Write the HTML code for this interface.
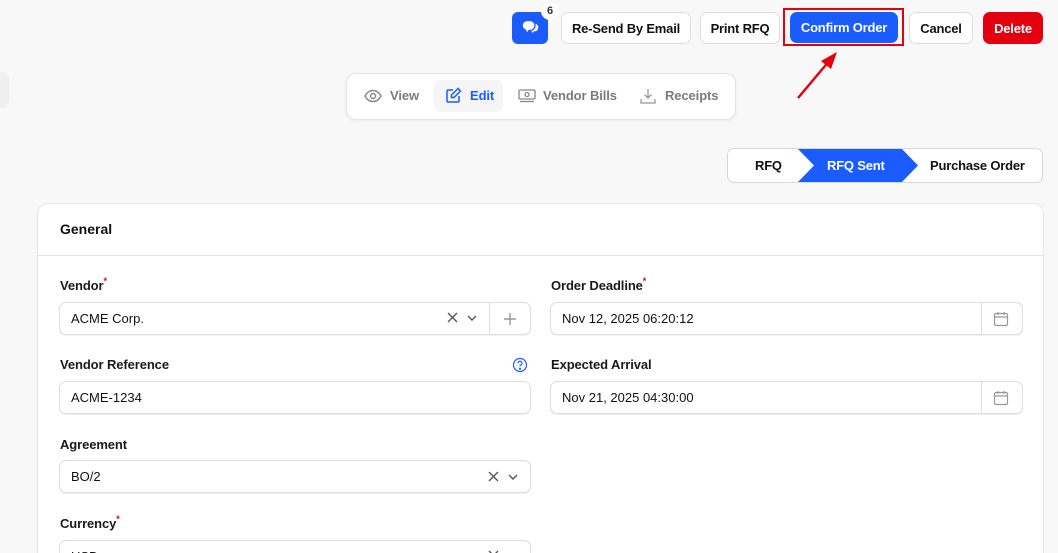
<!DOCTYPE html>
<html style="width:1058px;height:553px;overflow:hidden"><head><meta charset="utf-8"><style>
*{box-sizing:border-box;margin:0;padding:0}
body{width:1058px;height:553px;overflow:hidden;background:#f8f8f8;font-family:"Liberation Sans",sans-serif;color:#111;position:relative;font-size:13px}
.a{position:absolute}
.btn{position:absolute;top:12px;height:32px;border:1px solid #ddd;border-radius:7px;background:#fff;font-weight:bold;font-size:13px;letter-spacing:-0.2px;display:flex;align-items:center;justify-content:center}
.lbl{position:absolute;font-weight:bold;font-size:13px;color:#1a1a1a;letter-spacing:-0.1px}
.req{color:#e3000f;font-size:9px;vertical-align:top;position:relative;top:-2px}
.inp{position:absolute;height:33px;border:1px solid #ddd;border-radius:7px;background:#fff;box-shadow:0 1px 1px rgba(0,0,0,.06);display:flex;align-items:center;padding-left:11px;font-size:13px}
.tab{position:absolute;top:88px;font-size:13px;font-weight:bold;color:#7a7a80;letter-spacing:-0.1px}
</style></head><body>
<div class="a" style="left:-10px;top:72px;width:19px;height:36px;background:#efefef;border-radius:8px"></div>

<div class="a" style="left:512px;top:12px;width:36px;height:32px;background:#1a5cff;border-radius:6px"></div>
<svg class="a" style="left:519px;top:17px" width="22" height="22" viewBox="0 0 22 22"><path d="M11 6h4.5a4.5 4.5 0 0 1 0 9H15l-1.5 3-1-3H11z" fill="#fff" stroke="#1a5cff" stroke-width="1.3"/><path d="M8 3.5h3a5 5 0 0 1 0 10h-1l-2.5 3.5-0.7-3.7A5 5 0 0 1 8 3.5z" fill="#fff" stroke="#1a5cff" stroke-width="1.3"/></svg>
<div class="a" style="left:541px;top:2px;width:18px;height:18px;border-radius:9px;background:#fff;font-size:11px;font-weight:bold;text-align:center;line-height:18px;color:#333">6</div>

<div class="btn" style="left:561px;width:130px">Re-Send By Email</div>
<div class="btn" style="left:700px;width:80px">Print RFQ</div>
<div class="a" style="left:783px;top:8px;width:121px;height:38px;border:2px solid #e3000f"></div>
<div class="btn" style="left:790px;width:108px;background:#1a5cff;border-color:#1a5cff;color:#fff;top:12px;height:31px">Confirm Order</div>
<div class="btn" style="left:909px;width:64px">Cancel</div>
<div class="btn" style="left:983px;width:60px;background:#e3000f;border-color:#e3000f;color:#fff">Delete</div>
<svg class="a" style="left:790px;top:45px" width="60" height="60"><line x1="8" y1="53" x2="40" y2="15" stroke="#e3000f" stroke-width="2.5"/><path d="M47 7 L31 16 L41 24 Z" fill="#e3000f"/></svg>

<div class="a" style="left:346px;top:73px;width:390px;height:47px;background:#fff;border:1px solid #e3e3e3;border-radius:10px;box-shadow:0 1px 3px rgba(0,0,0,.06)"></div>
<div class="a" style="left:434px;top:80px;width:69px;height:32px;background:#f5f5f7;border-radius:7px"></div>
<svg class="a" style="left:364px;top:88px" width="18" height="16" viewBox="0 0 18 16" fill="none" stroke="#888" stroke-width="1.4"><path d="M1 8C3 4 6 2.5 9 2.5S15 4 17 8C15 12 12 13.5 9 13.5S3 12 1 8z"/><circle cx="9" cy="8" r="2.5"/></svg>
<div class="tab" style="left:390px">View</div>
<svg class="a" style="left:445px;top:87px" width="17" height="17" viewBox="0 0 17 17" fill="none" stroke="#1a5cff" stroke-width="1.5"><path d="M8 3H3a1 1 0 0 0-1 1v10a1 1 0 0 0 1 1h10a1 1 0 0 0 1-1V9"/><path d="M13 1.5l2.5 2.5L9 10.5H6.5V8z"/></svg>
<div class="tab" style="left:470px;color:#1a5cff">Edit</div>
<svg class="a" style="left:518px;top:89px" width="18" height="14" viewBox="0 0 18 14" fill="none" stroke="#888" stroke-width="1.3"><rect x="1" y="1" width="16" height="9" rx="1"/><circle cx="9" cy="5.5" r="2"/><path d="M2 12.5h14"/></svg>
<div class="tab" style="left:543px">Vendor Bills</div>
<svg class="a" style="left:639px;top:87px" width="18" height="18" viewBox="0 0 18 18" fill="none" stroke="#999" stroke-width="1.3"><path d="M9 2v9M5.5 7.5L9 11l3.5-3.5M2 12v4h14v-4"/></svg>
<div class="tab" style="left:665px">Receipts</div>

<div class="a" style="left:727px;top:148px;width:316px;height:35px;background:#fff;border:1px solid #d8d8d8;border-radius:7px"></div>
<svg class="a" style="left:798px;top:149px" width="122" height="33"><path d="M0 0H104L120 16.5L104 33H0L16 16.5Z" fill="#1a5cff"/></svg>
<div class="a" style="left:755px;top:158px;font-weight:bold;letter-spacing:-0.2px">RFQ</div>
<div class="a" style="left:827px;top:158px;font-weight:bold;color:#fff;letter-spacing:-0.2px">RFQ Sent</div>
<div class="a" style="left:930px;top:158px;font-weight:bold;letter-spacing:-0.2px">Purchase Order</div>

<div class="a" style="left:37px;top:203px;width:1007px;height:350px;background:#fff;border:1px solid #e6e6e6;border-bottom:none;border-radius:11px 11px 0 0"></div>
<div class="a" style="left:38px;top:255px;width:1005px;height:1px;background:#e6e6e6"></div>
<div class="a" style="left:60px;top:221px;font-weight:bold;font-size:14px">General</div>

<div class="lbl" style="left:60px;top:278px">Vendor<span class="req">*</span></div>
<div class="inp" style="left:59px;top:302px;width:472px">ACME Corp.</div>
<div class="a" style="left:489px;top:303px;width:1px;height:32px;background:#ddd"></div>
<svg class="a" style="left:446px;top:312px" width="36" height="12" fill="none" stroke="#555" stroke-width="1.4"><path d="M2 1l9 9M11 1l-9 9"/><path d="M22 4l4 4 4-4"/></svg>
<svg class="a" style="left:503px;top:312px" width="14" height="14" fill="none" stroke="#999" stroke-width="1.4"><path d="M7 1v12M1 7h12"/></svg>

<div class="lbl" style="left:60px;top:357px">Vendor Reference</div>
<svg class="a" style="left:512px;top:357px" width="16" height="16" fill="none" stroke="#1a5cff" stroke-width="1.2"><circle cx="8" cy="8" r="6.5"/><path d="M6 6.3a2 2 0 1 1 2.5 1.9c-.5.2-.5.6-.5 1.3"/><circle cx="8" cy="11.7" r=".5" fill="#1a5cff"/></svg>
<div class="inp" style="left:59px;top:381px;width:472px">ACME-1234</div>

<div class="lbl" style="left:60px;top:437px">Agreement</div>
<div class="inp" style="left:59px;top:460px;width:472px">BO/2</div>
<svg class="a" style="left:487px;top:471px" width="36" height="12" fill="none" stroke="#555" stroke-width="1.4"><path d="M2 1l9 9M11 1l-9 9"/><path d="M22 4l4 4 4-4"/></svg>

<div class="lbl" style="left:60px;top:516px">Currency<span class="req">*</span></div>
<div class="a" style="left:59px;top:540px;width:472px;height:13px;overflow:hidden;border:1px solid #ddd;border-bottom:none;border-radius:7px 7px 0 0;background:#fff">
<div style="position:absolute;left:11px;top:8px;font-size:13px;line-height:15px">USD</div>
<svg style="position:absolute;left:427px;top:9px" width="36" height="12" fill="none" stroke="#555" stroke-width="1.4"><path d="M2 1l9 9M11 1l-9 9"/><path d="M22 4l4 4 4-4"/></svg>
</div>

<div class="lbl" style="left:551px;top:278px">Order Deadline<span class="req">*</span></div>
<div class="inp" style="left:550px;top:302px;width:473px">Nov 12, 2025 06:20:12</div>
<div class="lbl" style="left:551px;top:357px">Expected Arrival</div>
<div class="inp" style="left:550px;top:381px;width:473px">Nov 21, 2025 04:30:00</div>
<div class="a" style="left:981px;top:303px;width:1px;height:32px;background:#ddd"></div>
<div class="a" style="left:981px;top:382px;width:1px;height:31px;background:#ddd"></div>
<svg class="a" style="left:993px;top:311px" width="16" height="16" fill="none" stroke="#999" stroke-width="1.2"><rect x="1.5" y="2.5" width="13" height="12" rx="1.5"/><path d="M1.5 6h13M5 1v3M11 1v3"/></svg>
<svg class="a" style="left:993px;top:390px" width="16" height="16" fill="none" stroke="#999" stroke-width="1.2"><rect x="1.5" y="2.5" width="13" height="12" rx="1.5"/><path d="M1.5 6h13M5 1v3M11 1v3"/></svg>
</body></html>
